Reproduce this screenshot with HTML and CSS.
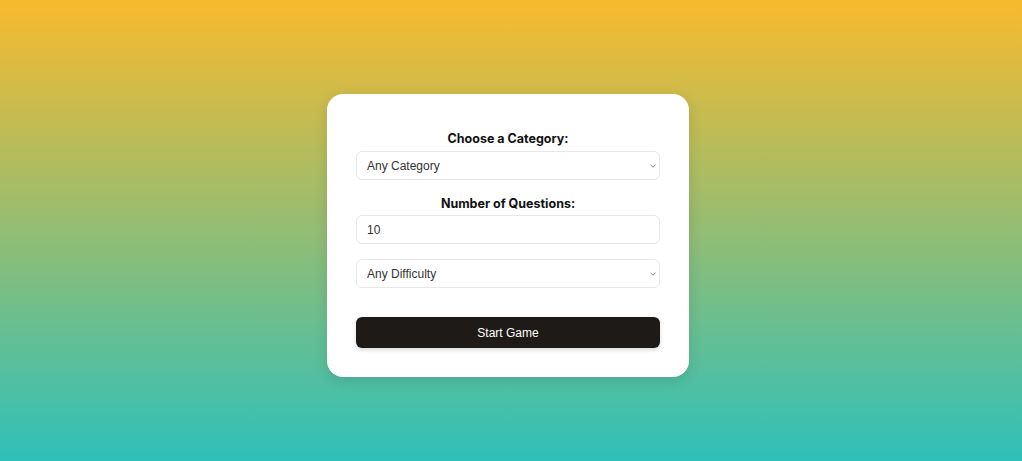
FILE: index.html
```html
<!DOCTYPE html>
<html>
<head>
<meta charset="utf-8">
<link rel="stylesheet" href="styles.css">
</head>
<body>
<main class="page">
  <form class="card">
    <div class="group first">
      <label class="label" for="cat">Choose a Category:</label>
      <select id="cat" class="field select">
        <option>Any Category</option>
      </select>
    </div>
    <div class="group second">
      <label class="label" for="num">Number of Questions:</label>
      <input id="num" class="field" type="number" value="10">
    </div>
    <div class="group">
      <select class="field select">
        <option>Any Difficulty</option>
      </select>
    </div>
    <button type="button" class="start">Start Game</button>
  </form>
</main>
</body>
</html>
```
FILE: styles.css
```css
* { box-sizing: border-box; }
html, body { margin: 0; height: 100%; }
body {
  background: linear-gradient(180deg, #f8ba2e 0%, #2ec0b9 100%);
  font-family: "Liberation Sans", Arial, sans-serif;
}
.page {
  min-height: 100vh;
  display: flex;
  align-items: center;
  justify-content: center;
  padding: 10px 6px 0 0;
}
.card {
  width: 362px;
  background: #fff;
  border-radius: 16px;
  padding: 37px 29px 29px;
  box-shadow: 0 4px 14px rgba(0, 0, 0, 0.12);
  display: flex;
  flex-direction: column;
}
.group {
  display: flex;
  flex-direction: column;
  margin-bottom: 15px;
}
.group.first { margin-bottom: 16px; }
.label {
  font-family: "Inter", "Open Sans", sans-serif;
  font-weight: 700;
  font-size: 12.5px;
  line-height: 16px;
  text-align: center;
  color: #111;
  margin-bottom: 4px;
}
.group.second .label { margin-bottom: 3px; }
.field {
  height: 29px;
  width: 100%;
  border: 1px solid #e8e8e8;
  border-radius: 6px;
  padding: 0 10px;
  font-family: "Liberation Sans", Arial, sans-serif;
  font-size: 12px;
  color: #333;
  background: #fff;
  outline: none;
}
input.field { color: #333; -moz-appearance: textfield; }
input.field::-webkit-inner-spin-button,
input.field::-webkit-outer-spin-button { -webkit-appearance: none; margin: 0; }
.select {
  -webkit-appearance: none;
  appearance: none;
  background-image: url("data:image/svg+xml;utf8,<svg xmlns='http://www.w3.org/2000/svg' width='6' height='4' viewBox='0 0 6 4'><path d='M0.5 0.8 L3 3.2 L5.5 0.8' fill='none' stroke='%23888' stroke-width='1'/></svg>");
  background-repeat: no-repeat;
  background-position: right 3px center;
  background-size: 6px 4px;
}
.start {
  margin-top: 14px;
  height: 31px;
  width: 100%;
  border: none;
  border-radius: 6px;
  background: #1e1a17;
  color: #fff;
  font-family: "Liberation Sans", Arial, sans-serif;
  font-size: 12px;
  box-shadow: 0 2px 4px rgba(0, 0, 0, 0.15);
  cursor: pointer;
}
```
